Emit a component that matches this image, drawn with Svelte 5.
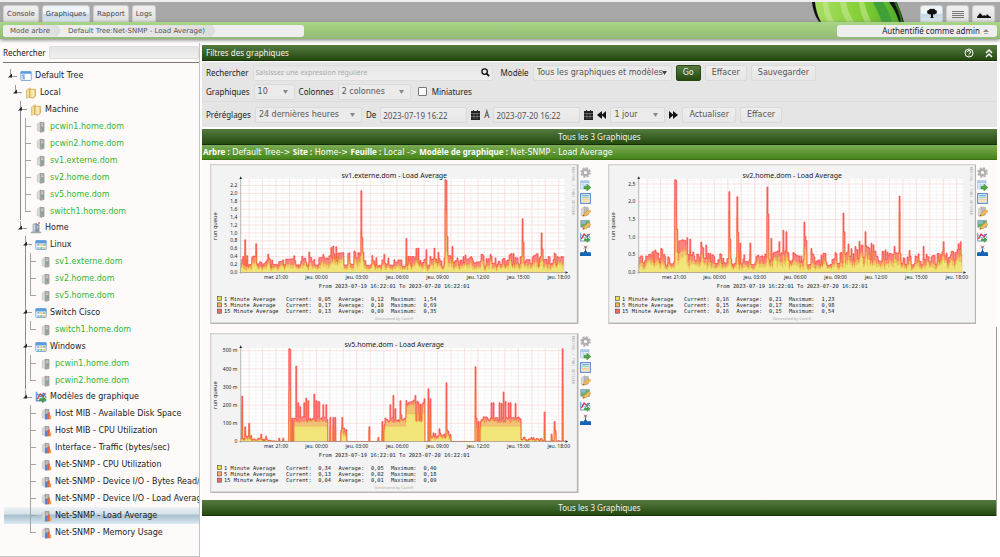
<script lang="ts">
  type Row = { label: string; depth: number; icon: string; guides?: number[]; last?: boolean };
  type Point = [number, number];

  const tabs = ["Console", "Graphiques", "Rapport", "Logs"];

  // depth drives the indentation, guides lists the depths whose vertical line runs through the row
  const rows: Row[] = [
    { label: "Default Tree", depth: 0, icon: "tree" },
    { label: "Local", depth: 1, icon: "folder" },
    { label: "Machine", depth: 2, icon: "folder", guides: [2] },
    { label: "pcwin1.home.dom", depth: 3, icon: "host", guides: [2] },
    { label: "pcwin2.home.dom", depth: 3, icon: "host", guides: [2] },
    { label: "sv1.externe.dom", depth: 3, icon: "host", guides: [2] },
    { label: "sv2.home.dom", depth: 3, icon: "host", guides: [2] },
    { label: "sv5.home.dom", depth: 3, icon: "host", guides: [2] },
    { label: "switch1.home.dom", depth: 3, icon: "host", guides: [2], last: true },
    { label: "Home", depth: 2, icon: "site", last: true },
    { label: "Linux", depth: 3, icon: "table", guides: [3] },
    { label: "sv1.externe.dom", depth: 4, icon: "host", guides: [3] },
    { label: "sv2.home.dom", depth: 4, icon: "host", guides: [3] },
    { label: "sv5.home.dom", depth: 4, icon: "host", guides: [3], last: true },
    { label: "Switch Cisco", depth: 3, icon: "table", guides: [3] },
    { label: "switch1.home.dom", depth: 4, icon: "host", guides: [3], last: true },
    { label: "Windows", depth: 3, icon: "table", guides: [3] },
    { label: "pcwin1.home.dom", depth: 4, icon: "host", guides: [3] },
    { label: "pcwin2.home.dom", depth: 4, icon: "host", guides: [3], last: true },
    { label: "Modèles de graphique", depth: 3, icon: "graph", last: true },
    { label: "Host MIB - Available Disk Space", depth: 4, icon: "template" },
    { label: "Host MIB - CPU Utilization", depth: 4, icon: "template" },
    { label: "Interface - Traffic (bytes/sec)", depth: 4, icon: "template" },
    { label: "Net-SNMP - CPU Utilization", depth: 4, icon: "template" },
    { label: "Net-SNMP - Device I/O - Bytes Read/Written", depth: 4, icon: "template" },
    { label: "Net-SNMP - Device I/O - Load Average", depth: 4, icon: "template" },
    { label: "Net-SNMP - Load Average", depth: 4, icon: "template" },
    { label: "Net-SNMP - Memory Usage", depth: 4, icon: "template", last: true }
  ];
  const selected = "Net-SNMP - Load Average";
  const isLeaf = (row: Row) => row.icon === "host" || row.icon === "template";

  const actions = [
    { name: "gear", title: "Utilitaires du graphique" },
    { name: "export", title: "Export CSV" },
    { name: "list", title: "Vue par liste" },
    { name: "device", title: "Editer l'équipement" },
    { name: "edit", title: "Editer le modèle" },
    { name: "realtime", title: "Temps réel" },
    { name: "spike", title: "Supprimer les pics" }
  ];

  const times = ["mer. 21:00", "jeu. 00:00", "jeu. 03:00", "jeu. 06:00", "jeu. 09:00", "jeu. 12:00", "jeu. 15:00", "jeu. 18:00"];

  const LEFT = 92;
  const RIGHT = 1062;
  const TOP = 45;
  const BOTTOM = 325;

  const graphs = [
    {
      host: "sv1.externe.dom",
      ticks: ["0,0", "0,2", "0,4", "0,6", "0,8", "1,0", "1,2", "1,4", "1,6", "1,8", "2,0", "2,2"],
      tickGap: 23.7,
      minor: 11.85,
      seed: 7,
      floor: 0.3,
      level: [[92, 50], [130, 56], [160, 38], [175, 60], [190, 36], [300, 54], [420, 68], [500, 48], [700, 52], [740, 54], [960, 60], [1062, 60]] as Point[],
      areas: [] as number[][],
      spikes: [[105, 98], [136, 86], [173, 55], [251, 50], [296, 61], [338, 54], [361, 75], [367, 79], [378, 77], [388, 58], [452, 245], [455, 105], [459, 60], [521, 54], [587, 102], [600, 48], [618, 72], [622, 73], [647, 68], [671, 73], [682, 60], [703, 278], [706, 276], [709, 108], [724, 78], [764, 52], [838, 54], [908, 57], [934, 161], [937, 90], [993, 118], [996, 70], [1030, 58], [1056, 46]] as Point[],
      legend: [["0,05", "0,12", "1,54"], ["0,17", "0,10", "0,69"], ["0,13", "0,09", "0,35"]]
    },
    {
      host: "sv2.home.dom",
      ticks: ["0,0", "0,5", "1,0", "1,5", "2,0", "2,5"],
      tickGap: 53,
      minor: 10.6,
      seed: 23,
      floor: 0.35,
      level: [[92, 60], [125, 58], [150, 84], [190, 40], [205, 104], [260, 88], [310, 76], [350, 50], [440, 56], [500, 92], [560, 60], [670, 58], [710, 80], [820, 92], [900, 54], [1062, 76]] as Point[],
      areas: [],
      spikes: [[199, 278], [202, 276], [205, 130], [213, 95], [237, 104], [246, 100], [278, 91], [293, 82], [361, 242], [364, 100], [385, 227], [388, 120], [394, 88], [425, 88], [476, 256], [479, 175], [489, 102], [511, 92], [523, 126], [533, 122], [587, 151], [590, 108], [593, 96], [608, 72], [704, 178], [708, 122], [719, 85], [753, 93], [771, 122], [856, 78], [872, 229], [903, 66], [943, 78], [1003, 92], [1048, 86], [1054, 92]] as Point[],
      legend: [["0,16", "0,21", "1,23"], ["0,15", "0,17", "0,98"], ["0,16", "0,15", "0,54"]]
    },
    {
      host: "sv5.home.dom",
      ticks: ["0", "100 m", "200 m", "300 m", "400 m", "500 m"],
      tickGap: 54.4,
      minor: 10.9,
      seed: 41,
      floor: 0.1,
      level: [[92, 14], [120, 22], [130, 12], [160, 10], [200, 0], [700, 0], [850, 0], [930, 14], [990, 14], [1000, 0], [1062, 4]] as Point[],
      // busy periods: start, end, height
      areas: [[250, 352, 60], [522, 584, 60], [585, 642, 110], [810, 930, 60], [392, 408, 30], [660, 720, 12]],
      spikes: [[94, 136], [104, 44], [115, 54], [152, 22], [168, 16], [206, 10], [219, 10], [237, 278], [240, 276], [244, 70], [256, 226], [262, 116], [268, 104], [280, 116], [286, 130], [292, 122], [310, 142], [316, 122], [322, 120], [326, 118], [337, 110], [347, 110], [358, 72], [367, 72], [374, 72], [394, 72], [404, 32], [476, 44], [503, 12], [514, 60], [520, 50], [538, 110], [548, 138], [554, 98], [568, 122], [572, 80], [614, 138], [617, 62], [626, 62], [632, 62], [640, 128], [652, 158], [658, 128], [672, 16], [685, 38], [706, 176], [710, 34], [714, 30], [793, 224], [796, 70], [803, 60], [808, 60], [841, 116], [848, 116], [866, 116], [871, 114], [877, 148], [883, 120], [893, 116], [900, 116], [913, 114], [920, 72], [1001, 88], [1022, 22], [1031, 60], [1034, 32], [1055, 278]] as Point[],
      legend: [["0,34", "0,05", "0,40"], ["0,13", "0,02", "0,18"], ["0,04", "0,01", "0,09"]]
    }
  ];
  type Graph = (typeof graphs)[number];

  function random(seed: number) {
    let s = seed;
    return () => {
      s = (s * 1103515245 + 12345) % 2147483648;
      return s / 2147483648;
    };
  }

  function levelAt(points: Point[], x: number) {
    const i = Math.max(1, points.findIndex((p) => p[0] >= x));
    const [x0, y0] = points[i - 1];
    const [x1, y1] = points[i];
    return y0 + ((y1 - y0) * (x - x0)) / (x1 - x0);
  }

  function stack(graph: Graph) {
    const rnd = random(graph.seed);
    const total: Point[] = [];
    const mid: Point[] = [];
    const low: Point[] = [];
    let held = 0.5;
    for (let x = LEFT; x <= RIGHT - 2; x += 3) {
      if (rnd() > 0.35) held = rnd();
      let value = levelAt(graph.level, x) * (graph.floor + (1 - graph.floor) * held);
      let flat = 0;
      for (const [from, to, height] of graph.areas) {
        if (x >= from && x <= to) {
          value = height + held * 14;
          if (height >= 60) flat = height;
        }
      }
      const spike = graph.spikes.find(([sx]) => Math.abs(sx - x) <= 1);
      if (spike) value = spike[1];
      const ratio = rnd();
      total.push([x, value]);
      mid.push([x, flat ? Math.min(value * 0.95, flat - 4 + ratio * 14) : value * (0.5 + ratio * 0.3)]);
      low.push([x, flat ? flat * 0.75 : Math.min(value * (0.25 + ratio * 0.4), 60)]);
    }
    return { total, mid, low };
  }

  const line = (points: Point[]) =>
    points.map(([x, v], i) => `${i ? "L" : "M"}${x} ${(BOTTOM - v).toFixed(1)}h3`).join("");
  const area = (points: Point[]) => `${line(points)}V${BOTTOM}H${LEFT}Z`;

  const series = graphs.map((graph) => stack(graph));
  const range = (from: number, to: number, step: number) => {
    const out: number[] = [];
    for (let v = from; v <= to; v += step) out.push(v);
    return out;
  };
</script>

{#snippet treeIcon(name: string)}
  <svg class="tree-icon" viewBox="0 0 16 16" aria-hidden="true">
    {#if name === "tree"}
      <rect x="1" y="2" width="14" height="12" rx="1" fill="#fff" stroke="#5c93cf" />
      <path d="M1 2h14v3H1z" fill="#5b9be0" />
      <path d="M2 5h5v8H2z" fill="#b9d6f2" />
      <path d="M3 7h2M4 9h2M4 11h2" stroke="#5784b8" />
    {:else if name === "folder"}
      <path d="M2 4l5-3v12l-5 2z" fill="#f4dc95" stroke="#d3b46c" />
      <path d="M6 3h8v9l-3 3-5-1z" fill="#ecd08a" stroke="#c9a65a" />
      <path d="M8 4h4v8l-3 2z" fill="#f9ebb8" />
    {:else if name === "site"}
      <path d="M4 3l4-1v12H4z" fill="#b9c4d1" stroke="#98a3b0" />
      <path d="M8 2l4 2v10H8z" fill="#8e9aaa" stroke="#77818d" />
      <path d="M5 5h2M5 7h2M5 9h2M9 6h2M9 8h2" stroke="#e8f1fa" />
      <path d="M11 0h2v3h-2z" fill="#d86f6f" />
      <path d="M1 13h14v2H1z" fill="#9cad9c" />
    {:else if name === "table"}
      <rect x="1" y="2" width="14" height="12" rx="1" fill="#fff" stroke="#5c93cf" />
      <path d="M1 2h14v4H1z" fill="#5b9be0" />
      <path d="M3 7h3v2H3zM3 11h3v2H3z" fill="#6aa5e2" />
      <path d="M7 7h3v2H7zM11 11h3v2h-3z" fill="#f0ae48" />
      <path d="M11 7h3v2h-3zM7 11h3v2H7z" fill="#5bb765" />
    {:else if name === "graph"}
      <path d="M2 1v12h13" fill="none" stroke="#6b9bc8" stroke-width="2" />
      <path d="M3 11l4-7 4 3 3-4" fill="none" stroke="#d33c4f" stroke-width="2" />
      <path d="M3 4l5 4 3-5 4 6" fill="none" stroke="#4b83c7" stroke-width="1.5" />
      <path d="M6 10h4V7l5 4-5 5v-3H6z" fill="#44a447" stroke="#2b7830" stroke-width=".5" />
    {:else}
      <path d="M3 4l5-3v13l-5-1z" fill="#dadada" stroke="#c5c5c5" />
      <path d="M7 2h5v12l-5 1z" fill="#a4a4a4" stroke="#969696" />
      <path d="M8 4h3M8 6h3" stroke="#d9d9d9" />
      {#if name === "template"}
        <path d="M7 8h3v7H7z" fill="#4c80d0" />
        <path d="M10 6h3v9h-3z" fill="#e0604d" />
        <path d="M13 10h2v5h-2z" fill="#e9a63a" />
      {:else}
        <circle cx="10" cy="10" r="1.2" fill="#52bb52" />
      {/if}
    {/if}
  </svg>
{/snippet}

{#snippet actionIcon(name: string)}
  <svg viewBox="0 0 16 16" aria-hidden="true">
    {#if name === "gear"}
      <circle cx="8" cy="8" r="6.500" fill="none" stroke="#b4b4b4" stroke-width="2.4" stroke-dasharray="3 2.1" />
      <circle cx="8" cy="8" r="4" fill="none" stroke="#b0b0b0" stroke-width="3.500" />
      <circle cx="8" cy="8" r="1.7" fill="#fefaf9" />
    {:else if name === "export"}
      <rect x="1" y="1" width="12" height="12" fill="#e6f1fb" stroke="#9fc0df" />
      <path d="M1 2h12v2H1z" fill="#8ab8e4" />
      <path d="M2 7h10M2 10h10M5 4v9" stroke="#b5cfe8" />
      <path d="M6 9h4V6l6 5-6 5v-3H6z" fill="#50a640" stroke="#37802b" stroke-width=".6" />
    {:else if name === "list"}
      <rect x="1" y="1" width="14" height="14" fill="#fff" stroke="#4f7ec2" stroke-width="1.6" />
      <path d="M3 4h10" stroke="#70a8e4" stroke-width="2" />
      <path d="M3 7h10" stroke="#8cc78b" stroke-width="1.6" />
      <path d="M3 10h10" stroke="#efb06c" stroke-width="1.6" />
      <path d="M3 12.6h10" stroke="#efd46c" stroke-width="1.2" />
    {:else if name === "device" || name === "edit"}
      {#if name === "device"}
        <path d="M2 4l5-3v12l-5 1z" fill="#ddd" stroke="#bbb" />
        <path d="M6 2h6v11l-6 1z" fill="#bcbcbc" stroke="#a6a6a6" />
      {:else}
        <path d="M1 2h13v10H1z" fill="#6cae62" stroke="#8aa5c0" />
        <path d="M2 3h6v4H2z" fill="#8db9dd" />
      {/if}
      <path d="M4 15l2-4 7-6 3 3-7 6z" fill="#f0bd55" stroke="#c79748" stroke-width=".8" />
      <path d="M4 15l1-2 2 1z" fill="#544a38" />
    {:else if name === "realtime"}
      <path d="M1 1v12h14" fill="none" stroke="#6b9bc8" stroke-width="1.500" />
      <path d="M2 10l4-7 4 4 4-4" fill="none" stroke="#d2344a" stroke-width="2" />
      <path d="M2 4l6 6 3-7 4 6" fill="none" stroke="#5c8fd1" stroke-width="1.400" />
      <path d="M6 10h4V7l5 4-5 5v-3H6z" fill="#45a440" />
    {:else}
      <path d="M6 1l4 4M10 1L6 5" stroke="#764557" stroke-width="1.400" />
      <path d="M8 5v4" stroke="#3e668e" stroke-width="1.500" />
      <path d="M0 11l3-1 2 1 3-4 3 4 2-1 3 1v5H0z" fill="#1763b4" />
    {/if}
  </svg>
{/snippet}

{#snippet calendar()}
  <button class="glyph" type="button" aria-label="Calendrier">
    <svg viewBox="0 0 9 10"><path d="M2 0h1v1h3V0h1v1h2v9H0V1h2z" fill="#222" /><path d="M0 3.500h9M0 6.500h9M3 3v6M6 3v6" stroke="#999" stroke-width=".5" /></svg>
  </button>
{/snippet}

<div class="page">
  <header class="top">
    <nav class="tabs">
      {#each tabs as tab}
        <a href="#{tab}" class:active={tab === "Graphiques"}>{tab}</a>
      {/each}
    </nav>
    <svg class="logo" viewBox="0 0 92 20" aria-hidden="true">
      <defs>
        <linearGradient id="cactus">
          <stop offset="0" stop-color="#a9de63" />
          <stop offset=".55" stop-color="#83cf35" />
          <stop offset="1" stop-color="#4fae2b" />
        </linearGradient>
      </defs>
      <path d="M0 0h84q5 9 8 20H7Q1 11 0 0z" fill="#111" />
      <path d="M3 0h74q7 9 10 20H9Q4 11 3 0z" fill="url(#cactus)" />
      <path d="M11 0h5q1 11 6 20h-6Q11 11 11 0zM28 0h6q2 11 8 20h-7Q29 11 28 0zM47 0h5q3 11 7 20h-6Q48 11 47 0z" fill="#c5ea92" opacity=".6" />
      <path d="M61 0h10q6 9 9 20H70Q66 9 61 0z" fill="#3fa038" />
      <path d="M82 0h3q4 9 6 20h-2Q87 10 82 0z" fill="#2d6b1d" />
    </svg>
    <div class="views">
      <button class="active" type="button" aria-label="Vue en arbre">
        <svg viewBox="0 0 14 14"><path d="M7 2q3-1 3 1 2 0 2 2t-2 2q-1 1-2 0v3l1 1H5l1-1V7Q5 8 4 7 2 7 2 5t2-2q1-2 3-1z" fill="#111" /></svg>
      </button>
      <button type="button" aria-label="Vue en liste">
        <svg viewBox="0 0 14 14"><path d="M1 4.500h12M1 6.500h12M1 8.500h12M1 10.500h12" stroke="#777" /></svg>
      </button>
      <button type="button" aria-label="Aperçu">
        <svg viewBox="0 0 14 14"><path d="M0 11v-1l3-4 3 3 1-1 2 1 1-2 2 2 2 1v1z" fill="#111" /></svg>
      </button>
    </div>
  </header>

  <div class="crumbs">
    <ol>
      <li><a href="#mode">Mode arbre</a></li>
      <li><a href="#tree">Default Tree:Net-SNMP - Load Average)</a></li>
    </ol>
    <button class="user" type="button">
      Authentifié comme admin
      <svg viewBox="0 0 6 6" aria-hidden="true"><path d="M0 4l3-3 3 3z" fill="#888" /><path d="M1 5.500h4" stroke="#aaa" /></svg>
    </button>
  </div>

  <div class="body">
    <aside>
      <div class="tree-search">
        <label for="tree-filter">Rechercher</label>
        <input id="tree-filter" type="text" />
      </div>
      <ul class="tree">
        {#each rows as row}
          {@const x = row.depth * 5}
          <li
            class:short={["tree", "site", "graph"].includes(row.icon)}
            class:selected={row.label === selected}
          >
            <svg class="guides" width={16 + x} height="17" aria-hidden="true">
              {#each row.guides ?? [] as depth}
                <path d="M{depth * 5 + 6.5} 0v17" stroke="#8a8a8a" />
              {/each}
              {#if isLeaf(row)}
                <path d="M{x + 6.5} {row.last ? 0 : 17}V{row.last ? 9 : 0}M{x + 6} 8.500h6" fill="none" stroke="#a4a4a4" />
              {:else}
                <path d="M{x + 6.5} 1v8M{x + 8} 8.500h5" stroke="#9a9a9a" />
                <path d="M{x + 4} 9.500h4v-4z" fill="#222" />
              {/if}
            </svg>
            {@render treeIcon(row.icon)}
            <a href="#node" class:host={row.icon === "host"}>{row.label}</a>
          </li>
        {/each}
      </ul>
    </aside>

    <main>
      <section>
        <div class="bar title">
          <span>Filtres des graphiques</span>
          <svg viewBox="0 0 30 10" aria-hidden="true">
            <circle cx="5" cy="5" r="4" fill="none" stroke="#fff" />
            <path d="M3.500 4q0-1.500 1.500-1.500T6.500 4 5 5.500M5 6.500v1" fill="none" stroke="#fff" />
            <path d="M22 5l3-3 3 3M22 9l3-3 3 3" fill="none" stroke="#fff" stroke-width="1.500" />
          </svg>
        </div>
        <form class="filters">
          <div class="filter-row">
            <label for="regex">Rechercher</label>
            <div class="search">
              <input id="regex" type="text" placeholder="Saisissez une expression régulière" />
              <svg viewBox="0 0 10 10" aria-hidden="true"><circle cx="4" cy="4" r="3" fill="none" stroke="#111" stroke-width="1.500" /><path d="M6 6l3 3" stroke="#111" stroke-width="2" /></svg>
            </div>
            <label for="template" class="model">Modèle</label>
            <select id="template" class="dark w-template"><option>Tous les graphiques et modèles</option></select>
            <button class="go" type="button">Go</button>
            <button type="button">Effacer</button>
            <button type="button">Sauvegarder</button>
          </div>
          <div class="filter-row">
            <label for="count">Graphiques</label>
            <select id="count" class="w-count"><option>10</option></select>
            <label for="columns">Colonnes</label>
            <select id="columns" class="w-columns"><option>2 colonnes</option></select>
            <input id="thumbs" type="checkbox" />
            <label for="thumbs">Miniatures</label>
          </div>
          <div class="filter-row time">
            <label for="preset">Préréglages</label>
            <select id="preset" class="w-preset"><option>24 dernières heures</option></select>
            <label for="from">De</label>
            <input id="from" class="date" type="text" value="2023-07-19 16:22" />
            {@render calendar()}
            <label for="to">À</label>
            <input id="to" class="date" type="text" value="2023-07-20 16:22" />
            {@render calendar()}
            <button class="glyph" type="button" aria-label="Reculer">
              <svg viewBox="0 0 9 10"><path d="M5 1v8L0 5zM9 1v8L4.500 5z" fill="#111" /></svg>
            </button>
            <select aria-label="Décalage" class="w-shift"><option>1 jour</option></select>
            <button class="glyph" type="button" aria-label="Avancer">
              <svg viewBox="0 0 9 10"><path d="M4 1v8l5-4zM0 1v8l4.500-4z" fill="#111" /></svg>
            </button>
            <button type="button">Actualiser</button>
            <button type="button">Effacer</button>
          </div>
        </form>
      </section>

      <section class="results">
        <div class="bar">Tous les 3 Graphiques</div>
        <div class="path">
          <b>Arbre :</b> Default Tree-&gt; <b>Site :</b> Home-&gt; <b>Feuille :</b> Local -&gt;
          <b>Modèle de graphique :</b> Net-SNMP - Load Average
        </div>
        <div class="graphs">
          {#each graphs as graph, g}
            <article>
              <svg class="graph" viewBox="0 0 1104 480" role="img" aria-label="{graph.host} - Load Average">
                <rect width="1104" height="480" fill="#b4b4b4" />
                <path d="M0 480V0h1104l-6 6v468H6z" fill="#d2d2d2" />
                <rect x="4" y="4" width="1095" height="471" fill="#f3f3f3" />
                <rect x={LEFT} y={TOP} width={RIGHT - LEFT} height={BOTTOM - TOP} fill="#fff" />
                {#each range(0, 279, graph.minor) as y}
                  <path d="M{LEFT} {BOTTOM - y}H{RIGHT}" stroke="#e4e4e4" stroke-width="1" />
                {/each}
                {#each range(117, RIGHT, 20.17) as x}
                  <path d="M{x} {TOP}V{BOTTOM}" stroke="#ebe6e6" stroke-width="1" />
                {/each}
                {#each range(117, RIGHT, 40.34) as x}
                  <path d="M{x} {TOP}V{BOTTOM + 3}" stroke="#fadada" stroke-width="2" />
                {/each}
                {#each graph.ticks as tick, i}
                  <path d="M{LEFT - 4} {BOTTOM - i * graph.tickGap}H{RIGHT + 3}" stroke="#fadada" stroke-width="2" />
                  <text class="axis" x="82" y={BOTTOM + 5 - i * graph.tickGap} text-anchor="end">{tick}</text>
                {/each}

                <path d={area(series[g].total)} fill="#fd8480" />
                <path d={area(series[g].mid)} fill="#f2bf76" />
                <path d={area(series[g].low)} fill="#f1e579" />
                <path d={line(series[g].low)} fill="none" stroke="#e5cc3a" stroke-width="1" />
                <path d={line(series[g].mid)} fill="none" stroke="#f0902c" stroke-width="1" />
                <path d={line(series[g].total)} fill="none" stroke="#fb3a31" stroke-width="2" />

                <path d="M{LEFT} {BOTTOM + 4}V{TOP - 5}M{LEFT - 4} {BOTTOM}H{RIGHT + 8}" fill="none" stroke="#999" stroke-width="2" />
                <path d="M{LEFT - 4} {TOP}l4-8 4 8zM{RIGHT + 3} {BOTTOM - 4}l8 4-8 4z" fill="#233" />
                {#each times as time, i}
                  <text class="axis" x={198 + i * 121} y="346" text-anchor="middle">{time}</text>
                {/each}

                <text class="graph-title" x="552" y="42" text-anchor="middle">{graph.host} - Load Average</text>
                <text class="unit" transform="translate(20 186) rotate(-90)" text-anchor="middle">run queue</text>
                <text class="mono" x="552" y="371" text-anchor="middle">From 2023-07-19 16:22:01 To 2023-07-20 16:22:01</text>
                {#each graph.legend as [current, average, maximum], i}
                  {@const y = 409 + i * 19}
                  <rect x="22" y={y - 12} width="12" height="12" fill={["#eade5c", "#f2b45c", "#fb6a62"][i]} stroke="#555" stroke-width="2" />
                  <text class="mono" x="42" {y}>{["1", "5", "15"][i]} Minute Average</text>
                  <text class="mono" x="228" {y}>Current:</text>
                  <text class="mono" x="324" {y}>{current}</text>
                  <text class="mono" x="385" {y}>Average:</text>
                  <text class="mono" x="482" {y}>{average}</text>
                  <text class="mono" x="542" {y}>Maximum:</text>
                  <text class="mono" x="640" {y}>{maximum}</text>
                {/each}
                <text class="credit" x="552" y="466" text-anchor="middle">Generated by Cacti®</text>
                <text class="watermark" transform="translate(1086 8) rotate(90)">RRDTOOL / TOBI OETIKER</text>
              </svg>
              <div class="actions">
                {#each actions as action}
                  <button type="button" aria-label={action.title}>{@render actionIcon(action.name)}</button>
                {/each}
              </div>
            </article>
          {/each}
        </div>
        <div class="bar">Tous les 3 Graphiques</div>
      </section>
    </main>
  </div>
</div>

<style>
  :global(body) {
    background: #fff;
  }

  .page {
    display: flex;
    flex-direction: column;
    min-height: 100vh;
    font-family: "Noto Sans", sans-serif;
    font-size: 8px;
    line-height: 12px;
    color: #222;
  }

  .page * {
    box-sizing: border-box;
  }

  a {
    color: inherit;
    text-decoration: none;
  }

  button,
  input,
  select {
    margin: 0;
    font: inherit;
    color: #555;
  }

  .top {
    display: flex;
    align-items: flex-end;
    height: 22px;
    padding: 0 5px 0 3px;
    border-top: 2px solid #eee;
    background: #a8a8a8;
  }

  .tabs,
  .views {
    display: flex;
    gap: 3px;
  }

  .tabs a,
  .views button {
    height: 17px;
    padding: 0 3px;
    border: 1px solid #ccc;
    border-bottom: 0;
    border-radius: 3px 3px 0 0;
    background: linear-gradient(#f0f0f0, #e0e0e0);
  }

  .tabs a {
    font-family: "DejaVu Sans", sans-serif;
    font-size: 7px;
    line-height: 17px;
    color: #444;
  }

  .tabs a.active,
  .views button.active {
    background: linear-gradient(#eef4f8 45%, #c3d6e2 55%, #e2eef6);
  }

  .logo {
    width: 92px;
    height: 20px;
    margin-left: auto;
    margin-right: 16px;
  }

  .views button {
    display: grid;
    place-items: center;
    width: 23px;
  }

  .views svg {
    width: 14px;
    height: 14px;
  }

  .crumbs {
    display: flex;
    justify-content: space-between;
    align-items: center;
    height: 17px;
    padding: 0 3px;
    background: linear-gradient(#a8d586, #94b974);
    box-shadow: 0 1px 4px #777;
  }

  .crumbs ol {
    display: flex;
    width: 301px;
    height: 12px;
    margin: 0;
    padding: 0;
    overflow: hidden;
    border-radius: 3px;
    background: #eee;
    list-style: none;
    font-family: "DejaVu Sans", sans-serif;
    font-size: 7px;
    color: #555;
  }

  .crumbs li {
    padding: 0 11px 0 7px;
    background: linear-gradient(90deg, #eee, #ddd);
    clip-path: polygon(0 0, calc(100% - 4px) 0, 100% 50%, calc(100% - 4px) 100%, 0 100%);
  }

  .user {
    display: flex;
    justify-content: flex-end;
    align-items: center;
    gap: 3px;
    width: 160px;
    height: 12px;
    padding: 0 8px;
    border: 0;
    border-radius: 3px;
    background: #eee;
    color: #222;
  }

  .user svg {
    width: 6px;
    height: 6px;
  }

  .body {
    display: flex;
    flex: 1;
    padding-top: 4px;
  }

  aside {
    flex: 0 0 200px;
    overflow: hidden;
    border-right: 1px solid #c4c4c4;
    border-bottom: 1px solid #c4c4c4;
    background: #fefaf9;
    font-family: "DejaVu Sans", sans-serif;
  }

  .tree-search {
    display: flex;
    align-items: center;
    gap: 3px;
    height: 20px;
    margin-left: 3px;
    border-bottom: 1px solid #777;
    font-family: "Noto Sans", sans-serif;
  }

  .tree-search input {
    flex: 1;
    min-width: 0;
    height: 13px;
    border: 1px solid #ddd;
    border-radius: 2px;
    background: linear-gradient(#e4e4e4, #efefef);
  }

  .tree {
    margin: 0;
    padding: 5px 0 0 4px;
    list-style: none;
  }

  .tree li {
    display: flex;
    align-items: center;
    height: 17px;
    overflow: hidden;
    white-space: nowrap;
  }

  .tree li.short {
    height: 16px;
  }

  .tree li.selected {
    background: linear-gradient(#eef3f6, #d6e1e8 40%, #a9c0ce 50%, #dceaf3);
  }

  .guides {
    flex: none;
  }

  .tree-icon {
    flex: none;
    width: 12px;
    height: 12px;
    margin-right: 3px;
  }

  .host {
    color: #33b533;
  }

  main {
    flex: 1;
    min-width: 0;
    padding: 2px 3px 0 2px;
  }

  .bar {
    height: 16px;
    border-bottom: 1px solid #173009;
    background: linear-gradient(#557b3f, #254a10);
    line-height: 16px;
    text-align: center;
    color: #f2f2f2;
  }

  .title {
    display: flex;
    justify-content: space-between;
    align-items: center;
    padding: 0 3px 0 4px;
  }

  .title svg {
    width: 30px;
    height: 10px;
  }

  .filters {
    margin-top: 1px;
    padding: 1px 4px 2px;
    background: #e5e5e5;
  }

  .filter-row {
    display: flex;
    align-items: center;
    gap: 4px;
    height: 19px;
  }

  .filter-row.time {
    height: 24px;
    margin: 0 -4px;
    padding: 3px 4px 0;
    border-top: 1px solid #dcdcdc;
  }

  .search {
    display: flex;
    align-items: center;
    width: 240px;
    height: 16px;
    padding-right: 2px;
    border: 1px solid #ddd;
    border-radius: 2px;
    background: linear-gradient(#e6e6e6, #efefef);
  }

  .search input {
    flex: 1;
    min-width: 0;
    padding: 0 2px;
    border: 0;
    background: none;
    font-size: 7px;
  }

  .search input::placeholder {
    color: #aaa;
  }

  .search svg {
    width: 9px;
    height: 9px;
  }

  .model {
    margin-left: 4px;
  }

  .filter-row button,
  .filter-row select,
  .date {
    height: 16px;
    border: 1px solid #dadada;
    border-radius: 2px;
    background: linear-gradient(#eee, #e7e7e7);
  }

  .filter-row button {
    padding: 0 6px;
    font-family: "DejaVu Sans", sans-serif;
  }

  .filter-row select {
    padding: 0 3px;
    appearance: none;
    background-image: url("data:image/svg+xml,%3Csvg xmlns='http://www.w3.org/2000/svg' width='5' height='4'%3E%3Cpath d='M0 0h5L2.5 4z' fill='%23888'/%3E%3C/svg%3E");
    background-repeat: no-repeat;
    background-position: right 6px center;
    background-color: #ebebeb;
    font-family: "DejaVu Sans", sans-serif;
  }

  .filter-row select.dark {
    background-image: url("data:image/svg+xml,%3Csvg xmlns='http://www.w3.org/2000/svg' width='5' height='4'%3E%3Cpath d='M0 0h5L2.5 4z' fill='%23444'/%3E%3C/svg%3E");
    background-position: right 4px center;
  }

  .w-template {
    width: 139px;
  }

  .w-count {
    width: 41px;
  }

  .w-columns {
    width: 73px;
  }

  .w-preset {
    width: 107px;
  }

  .w-shift {
    width: 55px;
  }

  .filter-row .go {
    border-color: #254a10;
    background: linear-gradient(#557b3f, #254a10);
    color: #f2f2f2;
  }

  input[type="checkbox"] {
    width: 9px;
    height: 9px;
    margin: 0 1px 0 3px;
    border: 1px solid #777;
    border-radius: 1px;
    background: #fff;
    appearance: none;
  }

  .date {
    width: 87px;
    padding: 0 2px;
  }

  .filter-row .glyph {
    width: 9px;
    padding: 0;
    border: 0;
    background: none;
  }

  .glyph svg {
    display: block;
    width: 9px;
    height: 10px;
  }

  .results {
    position: relative;
    margin-top: 2px;
    background: #fefaf9;
  }

  /* scroll thumb along the right edge of the results */
  .results::after {
    content: "";
    position: absolute;
    right: 0;
    bottom: 0;
    width: 1px;
    height: 49%;
    background: #999;
  }

  .path {
    height: 15px;
    padding: 0 1px;
    overflow: hidden;
    border-bottom: 1px solid #3d7016;
    background: linear-gradient(#7bad55, #46851a);
    font-family: "DejaVu Sans", sans-serif;
    line-height: 14px;
    white-space: nowrap;
    color: #fff;
  }

  .path b {
    font-family: "Noto Sans", sans-serif;
  }

  .graphs {
    display: grid;
    grid-template-columns: 1fr 1fr;
    gap: 9px 16px;
    padding: 4px 8px 7px;
  }

  article {
    display: flex;
    align-items: flex-start;
    gap: 1px;
    min-width: 0;
  }

  .graph {
    flex: 1;
    min-width: 0;
  }

  .axis,
  .graph-title,
  .unit,
  .credit {
    font-family: "Noto Sans", sans-serif;
    fill: #222;
  }

  .axis {
    font-size: 15px;
  }

  .graph-title {
    font-size: 21px;
  }

  .unit {
    font-size: 17px;
  }

  .mono {
    font-family: "DejaVu Sans Mono", monospace;
    font-size: 16px;
    fill: #222;
  }

  .credit {
    font-size: 12px;
    fill: #aaa;
  }

  .watermark {
    font-family: "DejaVu Sans Mono", monospace;
    font-size: 11px;
    fill: #aaa;
  }

  .actions {
    display: flex;
    flex: 0 0 12px;
    flex-direction: column;
    padding-top: 2px;
  }

  .actions button {
    height: 13px;
    padding: 0;
    border: 0;
    background: none;
  }

  .actions svg {
    display: block;
    width: 11px;
    height: 11px;
  }
</style>
